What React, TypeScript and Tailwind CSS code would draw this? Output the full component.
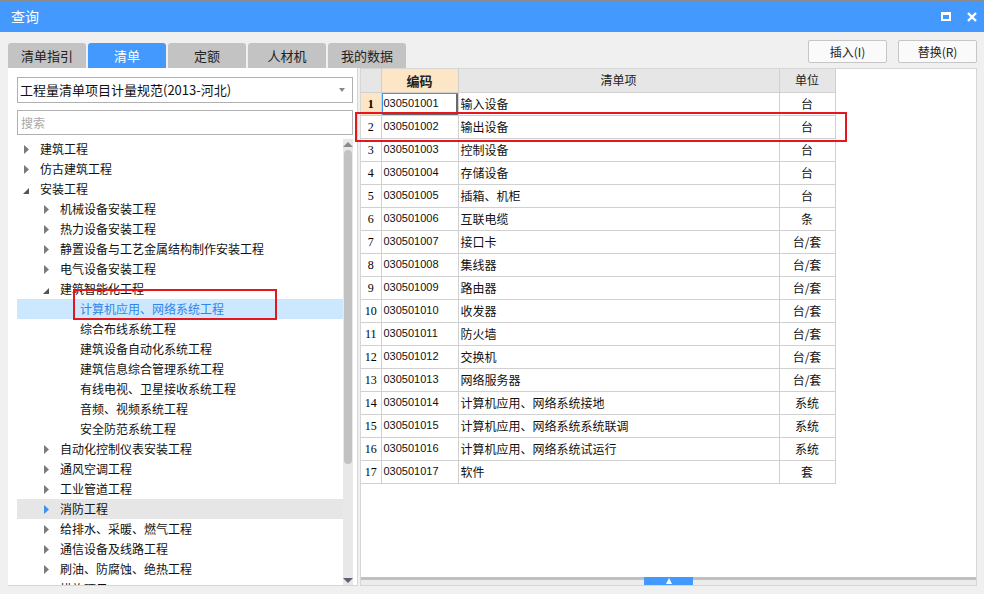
import React from "react";

type TreeNode = {
  label: string;
  level: number;
  state: "collapsed" | "expanded" | "leaf";
  selected?: boolean;
  hover?: boolean;
};

const treeNodes: TreeNode[] = [
  { label: "建筑工程", level: 0, state: "collapsed" },
  { label: "仿古建筑工程", level: 0, state: "collapsed" },
  { label: "安装工程", level: 0, state: "expanded" },
  { label: "机械设备安装工程", level: 1, state: "collapsed" },
  { label: "热力设备安装工程", level: 1, state: "collapsed" },
  { label: "静置设备与工艺金属结构制作安装工程", level: 1, state: "collapsed" },
  { label: "电气设备安装工程", level: 1, state: "collapsed" },
  { label: "建筑智能化工程", level: 1, state: "expanded" },
  { label: "计算机应用、网络系统工程", level: 2, state: "leaf", selected: true },
  { label: "综合布线系统工程", level: 2, state: "leaf" },
  { label: "建筑设备自动化系统工程", level: 2, state: "leaf" },
  { label: "建筑信息综合管理系统工程", level: 2, state: "leaf" },
  { label: "有线电视、卫星接收系统工程", level: 2, state: "leaf" },
  { label: "音频、视频系统工程", level: 2, state: "leaf" },
  { label: "安全防范系统工程", level: 2, state: "leaf" },
  { label: "自动化控制仪表安装工程", level: 1, state: "collapsed" },
  { label: "通风空调工程", level: 1, state: "collapsed" },
  { label: "工业管道工程", level: 1, state: "collapsed" },
  { label: "消防工程", level: 1, state: "collapsed", hover: true },
  { label: "给排水、采暖、燃气工程", level: 1, state: "collapsed" },
  { label: "通信设备及线路工程", level: 1, state: "collapsed" },
  { label: "刷油、防腐蚀、绝热工程", level: 1, state: "collapsed" },
  { label: "措施项目", level: 1, state: "collapsed" },
];

const rows: [string, string, string][] = [
  ["030501001", "输入设备", "台"],
  ["030501002", "输出设备", "台"],
  ["030501003", "控制设备", "台"],
  ["030501004", "存储设备", "台"],
  ["030501005", "插箱、机柜", "台"],
  ["030501006", "互联电缆", "条"],
  ["030501007", "接口卡", "台/套"],
  ["030501008", "集线器", "台/套"],
  ["030501009", "路由器", "台/套"],
  ["030501010", "收发器", "台/套"],
  ["030501011", "防火墙", "台/套"],
  ["030501012", "交换机", "台/套"],
  ["030501013", "网络服务器", "台/套"],
  ["030501014", "计算机应用、网络系统接地", "系统"],
  ["030501015", "计算机应用、网络系统系统联调", "系统"],
  ["030501016", "计算机应用、网络系统试运行", "系统"],
  ["030501017", "软件", "套"],
];

const tabs = ["清单指引", "清单", "定额", "人材机", "我的数据"];

const Arrow = ({ state, hover }: { state: TreeNode["state"]; hover?: boolean }) => {
  if (state === "leaf") return null;
  if (state === "expanded") {
    return (
      <svg width="6" height="6" viewBox="0 0 6 6" className="ml-[6px] mt-[3px]">
        <polygon points="6,0 6,6 0,6" fill="#555" />
      </svg>
    );
  }
  return (
    <svg width="5" height="9" viewBox="0 0 5 9" className="ml-[7px]">
      <polygon points="0,0 5,4.5 0,9" fill={hover ? "#3d8ff0" : "#7a7a7a"} />
    </svg>
  );
};

const TreeRow = ({ node }: { node: TreeNode }) => (
  <div
    className={`flex items-center h-[20px] shrink-0 ${
      node.selected ? "bg-[#cce8ff]" : node.hover ? "bg-[#e6e6e6]" : ""
    }`}
  >
    <div style={{ width: node.level * 20 }} className="shrink-0" />
    <div className="w-[23px] shrink-0 flex items-center">
      <Arrow state={node.state} hover={node.hover} />
    </div>
    <span
      className={`whitespace-nowrap text-[12px] ${
        node.selected ? "text-[#2f86e8]" : "text-[#111]"
      }`}
    >
      {node.label}
    </span>
  </div>
);

export default function App() {
  return (
    <div
      className="w-[984px] h-[594px] bg-[#f0f0f0] relative overflow-hidden"
      style={{ fontFamily: '"Noto Sans CJK SC", "Liberation Sans", sans-serif' }}
    >
      {/* title bar */}
      <div className="h-[32px] bg-[#4499ff] border-t border-[#8a8a8a] flex items-center justify-between pl-[11px] pr-[7px]">
        <span className="text-white text-[14px]">查询</span>
        <div className="flex items-center gap-[16px]">
          <div className="w-[10px] h-[9px] border-2 border-t-[3px] border-white" />
          <svg width="10" height="10" viewBox="0 0 10 10">
            <path d="M1 1 L9 9 M9 1 L1 9" stroke="#fff" strokeWidth="2.4" />
          </svg>
        </div>
      </div>

      <div className="flex gap-[2px] px-[8px]">
        {/* left column */}
        <div className="flex flex-col pt-[11px] w-[350px] shrink-0">
          <div className="flex gap-[2px] h-[25px] w-max relative z-10">
            {tabs.map((t, i) => (
              <div
                key={t}
                className={`w-[78px] shrink-0 rounded-t-[3px] flex items-center justify-center text-[13px] ${
                  i === 1 ? "bg-[#4499ff] text-white" : "bg-[#c3c3c3] text-[#222]"
                }`}
              >
                {t}
              </div>
            ))}
          </div>
          <div className="h-[518px] bg-white border-r border-b border-[#d6d6d6] pl-[9px] pt-[9px] flex flex-col">
            <div className="w-[336px] h-[26px] border border-[#b0b0b0] flex items-center justify-between pl-[2px] pr-[7px]">
              <span className="text-[13px] text-[#111]">工程量清单项目计量规范(2013-河北)</span>
              <div className="w-0 h-0 border-x-[3px] border-x-transparent border-t-[4px] border-t-[#888]" />
            </div>
            <div className="w-[336px] h-[25px] mt-[7px] border border-[#b0b0b0] flex items-center pl-[3px]">
              <span className="text-[12px] text-[#a8a8a8]">搜索</span>
            </div>
            <div className="flex mt-[4px] h-[446px] overflow-hidden">
              <div className="w-[326px] flex flex-col overflow-hidden">
                {treeNodes.map((n) => (
                  <TreeRow key={n.label} node={n} />
                ))}
              </div>
              <div className="w-[10px] bg-[#e8e8e8] flex flex-col items-center pt-[3px]">
                <div className="w-0 h-0 border-x-[5px] border-x-transparent border-b-[5px] border-b-[#8a8a8a]" />
                <div className="w-[8px] h-[314px] bg-[#c2c2c2] rounded-[4px] mt-[3px]" />
                <div className="flex-1" />
                <div className="w-0 h-0 border-x-[5px] border-x-transparent border-t-[5px] border-t-[#606070] mb-[2px]" />
              </div>
            </div>
          </div>
        </div>

        {/* right column */}
        <div className="flex flex-col pt-[8px] w-[617px] shrink-0">
          <div className="flex justify-end gap-[11px] h-[23px]">
            <button className="w-[79px] h-[23px] bg-[#fafafa] border border-[#c6c6c6] rounded-[2px] text-[12px] text-[#222]">
              插入(I)
            </button>
            <button className="w-[79px] h-[23px] bg-[#fafafa] border border-[#c6c6c6] rounded-[2px] text-[12px] text-[#222]">
              替换(R)
            </button>
          </div>
          <div className="mt-[5px] h-[518px] bg-white border border-[#d6d6d6] flex flex-col">
            <div className="flex-1 overflow-hidden">
              <table className="border-collapse table-fixed w-[474px] text-[12px]">
                <colgroup>
                  <col className="w-[20px]" />
                  <col className="w-[77px]" />
                  <col className="w-[321px]" />
                  <col className="w-[56px]" />
                </colgroup>
                <thead>
                  <tr className="h-[23px]">
                    <th className="bg-[#e6e6e6] border border-[#d0d0d0] border-t-0 border-l-0" />
                    <th className="bg-[#fde6c6] border border-[#d0d0d0] border-t-0 font-bold text-[13px] text-[#222]">
                      编码
                    </th>
                    <th className="bg-[#e6e6e6] border border-[#d0d0d0] border-t-0 font-normal text-[#222]">
                      清单项
                    </th>
                    <th className="bg-[#e6e6e6] border border-[#d0d0d0] border-t-0 font-normal text-[#222]">
                      单位
                    </th>
                  </tr>
                </thead>
                <tbody>
                  {rows.map(([code, name, unit], i) => (
                    <tr key={code} className="h-[23px]">
                      <td
                        className={`border border-[#d0d0d0] border-l-0 text-center p-0 text-[12px] ${
                          i === 0 ? "bg-[#fde6c6] font-bold" : ""
                        }`}
                        style={{ fontFamily: '"Liberation Serif", "DejaVu Serif", serif' }}
                      >
                        {i + 1}
                      </td>
                      <td
                        className={`border border-[#d0d0d0] pl-[2px] p-0 text-[11px] text-[#111] ${
                          i === 0 ? "shadow-[inset_1px_1px_0_#3399ff,inset_-2px_-2px_0_#6a6a6a]" : ""
                        }`}
                        style={{ fontFamily: '"Liberation Sans", sans-serif' }}
                      >
                        {code}
                      </td>
                      <td className="border border-[#d0d0d0] pl-[2px] p-0 text-[#111] whitespace-nowrap">
                        {name}
                      </td>
                      <td className="border border-[#d0d0d0] text-center p-0 text-[#111]">{unit}</td>
                    </tr>
                  ))}
                </tbody>
              </table>
            </div>
            <div className="h-[8px] flex flex-col relative">
              <div className="h-[3px] bg-[#c0c0c0]" />
              <div className="flex-1 bg-[#ececec]" />
              <div className="absolute left-[283px] top-0 w-[49px] h-[8px] bg-[#4499ff] flex items-center justify-center">
                <div className="w-0 h-0 border-x-[3px] border-x-transparent border-b-[6px] border-b-white" />
              </div>
            </div>
          </div>
        </div>
      </div>

      {/* red highlight boxes */}
      <div className="absolute left-[73px] top-[289px] w-[204px] h-[31px] border-2 border-[#e5161e]" />
      <div className="absolute left-[355px] top-[112px] w-[492px] h-[30px] border-2 border-[#e5161e]" />
    </div>
  );
}
